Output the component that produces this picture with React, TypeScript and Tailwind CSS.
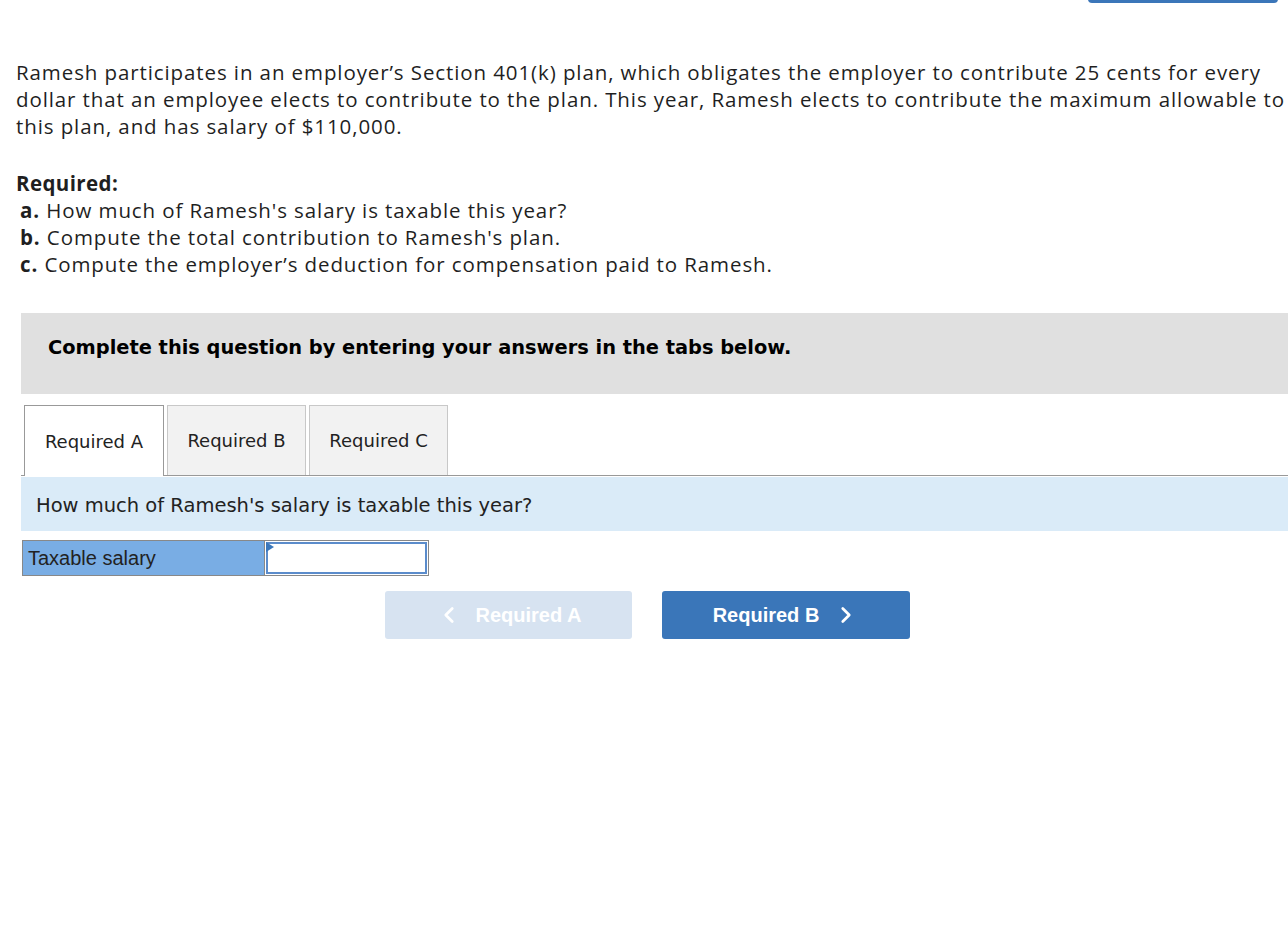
import { ChevronLeft, ChevronRight } from 'lucide-react';

const tabs = ['Required A', 'Required B', 'Required C'];

const App = () => {
  return (
    <div className="relative min-h-[936px] w-[1288px] overflow-hidden bg-white text-[#1f1f1f]">
      <div className="absolute right-[10px] top-[-6px] h-[9px] w-[190px] rounded-b-[4px] bg-[#3b76b9]" />

      <div className="pl-4 pt-[59px] font-['Open_Sans',sans-serif] text-[20.5px] leading-[27px] tracking-[0.9px]">
        <p className="whitespace-nowrap">
          Ramesh participates in an employer’s Section 401(k) plan, which obligates the employer to contribute 25 cents for every
          <br />
          dollar that an employee elects to contribute to the plan. This year, Ramesh elects to contribute the maximum allowable to
          <br />
          this plan, and has salary of $110,000.
        </p>

        <div className="mt-[30px]">
          <p className="font-bold tracking-[0.4px]">Required:</p>
          <p className="pl-1"><b>a.</b> How much of Ramesh's salary is taxable this year?</p>
          <p className="pl-1"><b>b.</b> Compute the total contribution to Ramesh's plan.</p>
          <p className="pl-1"><b>c.</b> Compute the employer’s deduction for compensation paid to Ramesh.</p>
        </div>
      </div>

      <div className="ml-[21px] mt-[35px]">
        <div className="flex h-[81px] items-start bg-[#e0e0e0] pl-[27px] pt-[20px] font-['DejaVu_Sans',sans-serif] text-[19.4px] font-bold text-black">
          Complete this question by entering your answers in the tabs below.
        </div>

        <div className="mt-[11px] flex gap-[3px] border-b border-[#999] pl-[3px] font-['DejaVu_Sans',sans-serif] text-[18px] text-[#222]">
          {tabs.map((t, i) => (
            <div
              key={t}
              className={
                i === 0
                  ? 'relative -mb-px flex h-[71px] w-[140px] items-center justify-center border border-b-0 border-[#999] bg-white'
                  : 'flex h-[70px] w-[139px] items-center justify-center border border-b-0 border-[#c8c8c8] bg-[#f2f2f2]'
              }
            >
              {t}
            </div>
          ))}
        </div>

        <div className="mt-px flex h-[54px] items-center bg-[#daebf8] pl-[15px] pt-[3px] font-['DejaVu_Sans',sans-serif] text-[19.5px] text-[#222]">
          How much of Ramesh's salary is taxable this year?
        </div>

        <div className="ml-px mt-[9px] flex h-[36px] w-[407px] border border-[#888]">
          <div className="flex w-[241px] items-center bg-[#79ade4] pl-[5px] font-['Liberation_Sans',sans-serif] text-[20px] text-[#222]">
            Taxable salary
          </div>
          <div className="relative flex-1 border-l border-[#888] bg-white p-px">
            <div className="h-full w-full border-2 border-[#5b8ccb]" />
            <div className="absolute left-px top-px h-0 w-0 border-y-[5px] border-l-[8px] border-y-transparent border-l-[#3a77bb]" />
          </div>
        </div>
      </div>

      <div className="mt-[15px] flex gap-[30px] pl-[385px] font-['Liberation_Sans',sans-serif] text-[20px] font-bold text-white">
        <div className="flex h-[48px] w-[247px] items-center justify-center gap-[14px] rounded-[3px] bg-[#d7e3f1]">
          <ChevronLeft size={26} strokeWidth={2.5} />
          <span>Required A</span>
        </div>
        <div className="flex h-[48px] w-[248px] items-center justify-center gap-[14px] rounded-[3px] bg-[#3a76b9]">
          <span>Required B</span>
          <ChevronRight size={26} strokeWidth={2.5} />
        </div>
      </div>
    </div>
  );
};

export default App;
